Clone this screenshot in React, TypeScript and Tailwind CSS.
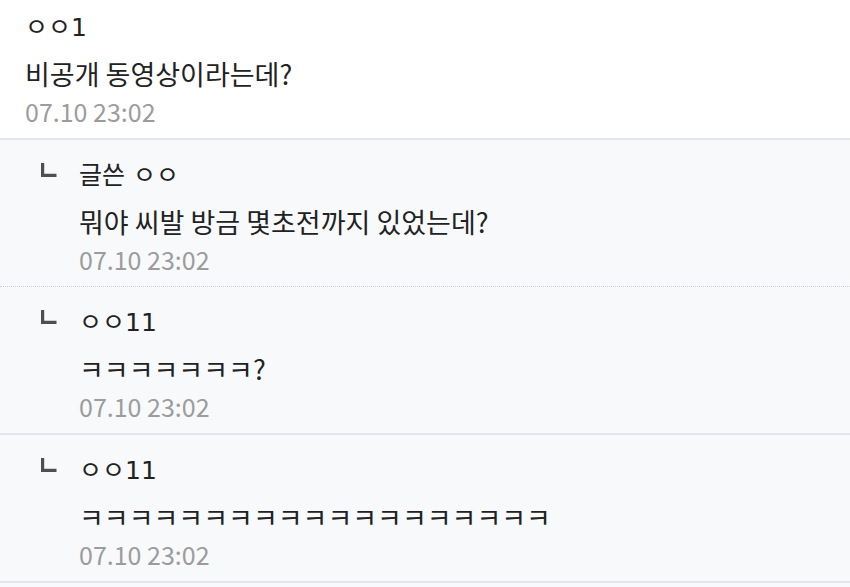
import React from 'react'

type Reply = {
  nick: string
  body: string
  time: string
  sep: 'dotted' | 'solid'
}

const replies: Reply[] = [
  { nick: '글쓴 ㅇㅇ', body: '뭐야 씨발 방금 몇초전까지 있었는데?', time: '07.10 23:02', sep: 'dotted' },
  { nick: 'ㅇㅇ11', body: 'ㅋㅋㅋㅋㅋㅋㅋ?', time: '07.10 23:02', sep: 'solid' },
  { nick: 'ㅇㅇ11', body: 'ㅋㅋㅋㅋㅋㅋㅋㅋㅋㅋㅋㅋㅋㅋㅋㅋㅋㅋㅋ', time: '07.10 23:02', sep: 'solid' },
]

const nickFont = "font-['DejaVu_Sans','Noto_Sans_CJK_KR',sans-serif]"

function ReplyArrow(){
  return (
    <div className="h-[44px] w-[38px] shrink-0 pt-[9px]">
      <svg width="16" height="14" viewBox="0 0 16 14" aria-hidden>
        <path d="M1.6 0 V12.4 H15.5" fill="none" stroke="#4f4f4f" strokeWidth="3.2" />
      </svg>
    </div>
  )
}

export default function App(){
  return (
    <div className="min-h-[587px] w-[850px] bg-[#f8f9fb] font-['Noto_Sans_CJK_KR','Noto_Sans',sans-serif] text-[#222]">
      <div className="border-b-2 border-[#e3e5ea] bg-white pb-[14px] pl-[25px] pt-[6px]">
        <div className={`${nickFont} h-[44px] text-[25px] leading-[44px]`}>ㅇㅇ1</div>
        <div className="h-[48px] text-[27px] leading-[48px]">비공개 동영상이라는데?</div>
        <div className="h-[26px] text-[25px] leading-[26px] text-[#9c9c9c]">07.10 23:02</div>
      </div>
      {replies.map((r, i)=> (
        <div
          key={i}
          className={`flex pb-[14px] pl-[41px] pt-[14px] ${r.sep === 'dotted' ? 'border-b border-dotted border-[#c9cdd4]' : 'border-b-2 border-[#e3e5ea]'}`}>
          <ReplyArrow />
          <div className="min-w-0">
            <div className={`${nickFont} h-[44px] text-[25px] leading-[44px]`}>{r.nick}</div>
            <div className="h-[48px] text-[27px] leading-[48px]">{r.body}</div>
            <div className="h-[26px] text-[25px] leading-[26px] text-[#9c9c9c]">{r.time}</div>
          </div>
        </div>
      ))}
    </div>
  )
}
